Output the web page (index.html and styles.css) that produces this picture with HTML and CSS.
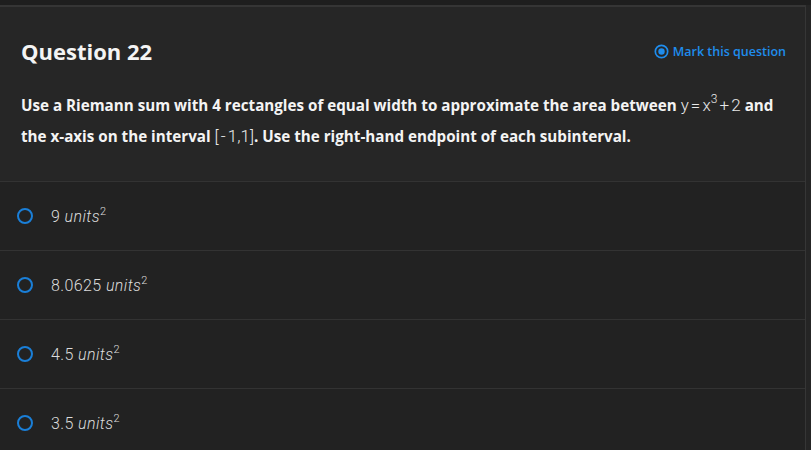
FILE: index.html
```html
<!DOCTYPE html>
<html>
<head>
<meta charset="utf-8">
<link rel="stylesheet" href="styles.css">
</head>
<body>
<div class="topstrip"></div>
<div class="card">
  <div class="qhead">
    <div class="title-row">
      <h2 class="qtitle">Question 22</h2>
      <a class="mark"><svg class="mark-icon" viewBox="0 0 16 16" width="15" height="15"><circle cx="8" cy="8" r="6.6" fill="none" stroke="currentColor" stroke-width="1.8"/><circle cx="8" cy="8" r="3.4" fill="currentColor"/></svg>Mark this question</a>
    </div>
    <p class="qtext">Use a Riemann sum with 4 rectangles of equal width to approximate the area between <span class="math">y = x<sup>3</sup> + 2</span> and the x-axis on the interval <span class="math">[ - 1,1]</span>. Use the right-hand endpoint of each subinterval.</p>
  </div>
  <ul class="options">
    <li class="option"><span class="radio"></span><span class="otext">9 <i>units</i><sup>2</sup></span></li>
    <li class="option"><span class="radio"></span><span class="otext">8.0625 <i>units</i><sup>2</sup></span></li>
    <li class="option"><span class="radio"></span><span class="otext">4.5 <i>units</i><sup>2</sup></span></li>
    <li class="option"><span class="radio"></span><span class="otext">3.5 <i>units</i><sup>2</sup></span></li>
  </ul>
</div>
</body>
</html>
```
FILE: styles.css
```css
html, body {
  margin: 0;
  padding: 0;
}
body {
  background: #252525;
  font-family: "Open Sans", "Liberation Sans", sans-serif;
  color: #f2f2f2;
  width: 811px;
  height: 450px;
  overflow: hidden;
}
.topstrip {
  height: 5px;
  background: #1e1e1e;
}
.card {
  width: 806px;
  box-sizing: border-box;
  border-top: 2px solid #353535;
  border-right: 1px solid #363636;
  background: #262626;
}
.qhead {
  padding: 0 24px 0 21px;
  height: 175px;
  box-sizing: border-box;
  border-bottom: 1px solid #333333;
}
.title-row {
  display: flex;
  align-items: center;
  justify-content: space-between;
  padding-top: 30px;
}
.qtitle {
  margin: 0;
  font-size: 22px;
  font-weight: 700;
  line-height: 28px;
  color: #f4f4f4;
}
.mark {
  display: flex;
  align-items: center;
  gap: 4px;
  color: #1f8ded;
  font-size: 12.5px;
  font-weight: 600;
  margin-right: -5px;
}
.mark-icon {
  display: block;
}
.qtext {
  margin: 25px 0 0;
  font-size: 15.2px;
  font-weight: 700;
  line-height: 31px;
  color: #f4f4f4;
}
.math {
  font-family: Roboto, "Liberation Sans", sans-serif;
  font-weight: 300;
  font-size: 17px;
  color: #e8e8e8;
  word-spacing: -2px;
  white-space: nowrap;
}
.math sup {
  font-size: 12px;
  vertical-align: 8px;
  line-height: 1;
}
.options {
  list-style: none;
  margin: 0;
  padding: 0;
  background: #222222;
}
.option {
  display: flex;
  align-items: center;
  height: 68px;
  border-bottom: 1px solid #333333;
  padding-left: 17px;
  gap: 18px;
}
.radio {
  width: 12px;
  height: 12px;
  border: 2px solid #1a7fd8;
  border-radius: 50%;
  flex: none;
}
.otext {
  font-family: Roboto, "Liberation Sans", sans-serif;
  font-size: 16px;
  letter-spacing: 0.4px;
  color: #dcdcdc;
  font-weight: 300;
}
.otext sup {
  font-size: 11px;
  vertical-align: 7px;
  line-height: 1;
}
```
